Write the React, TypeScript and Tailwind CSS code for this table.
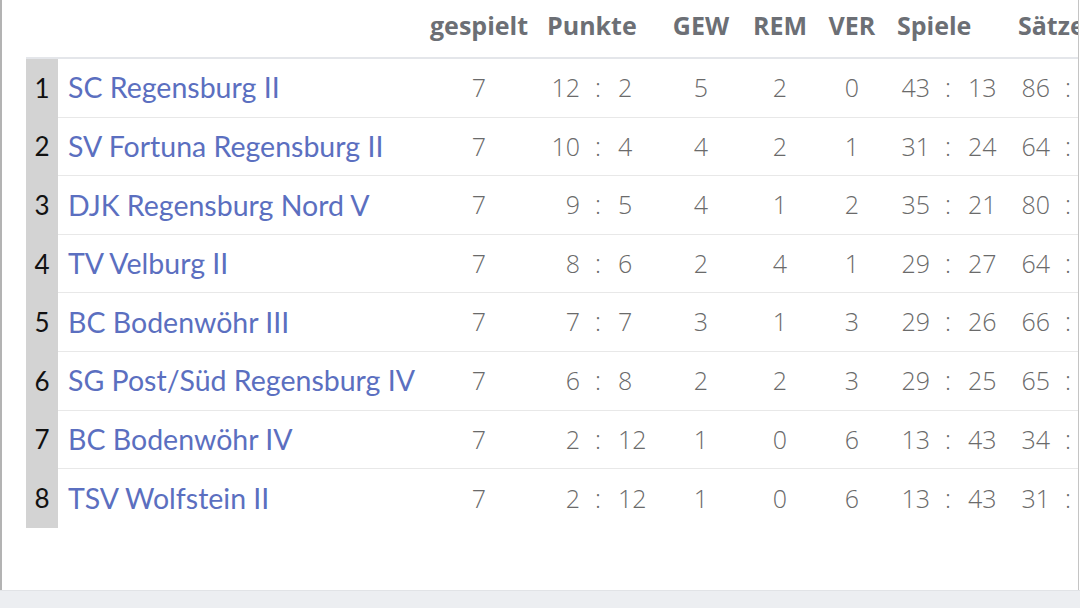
import React from "react";

type Row = {
  rank: number;
  name: string;
  sp: number;
  p: [number, number];
  g: number;
  r: number;
  v: number;
  s: [number, number];
  sa: number;
};

const rows: Row[] = [
  { rank: 1, name: "SC Regensburg II", sp: 7, p: [12, 2], g: 5, r: 2, v: 0, s: [43, 13], sa: 86 },
  { rank: 2, name: "SV Fortuna Regensburg II", sp: 7, p: [10, 4], g: 4, r: 2, v: 1, s: [31, 24], sa: 64 },
  { rank: 3, name: "DJK Regensburg Nord V", sp: 7, p: [9, 5], g: 4, r: 1, v: 2, s: [35, 21], sa: 80 },
  { rank: 4, name: "TV Velburg II", sp: 7, p: [8, 6], g: 2, r: 4, v: 1, s: [29, 27], sa: 64 },
  { rank: 5, name: "BC Bodenwöhr III", sp: 7, p: [7, 7], g: 3, r: 1, v: 3, s: [29, 26], sa: 66 },
  { rank: 6, name: "SG Post/Süd Regensburg IV", sp: 7, p: [6, 8], g: 2, r: 2, v: 3, s: [29, 25], sa: 65 },
  { rank: 7, name: "BC Bodenwöhr IV", sp: 7, p: [2, 12], g: 1, r: 0, v: 6, s: [13, 43], sa: 34 },
  { rank: 8, name: "TSV Wolfstein II", sp: 7, p: [2, 12], g: 1, r: 0, v: 6, s: [13, 43], sa: 31 },
];

const cols =
  "grid grid-cols-[32px_362px_118px_48px_24px_52px_78px_80px_64px_52px_24px_50px_46px_24px_60px]";

export default function App() {
  return (
    <div className="w-[1080px] h-[608px] bg-white relative overflow-hidden">
      <div className="flex flex-col h-full">
        <div className="flex-1 border-l-2 border-r border-l-[#b3b3b3] border-r-[#c4c4c4] mr-[1px] overflow-hidden">
          <div className="ml-[24px] w-[1200px]">
            {/* header */}
            <div
              className={`${cols} h-[59px] border-b-2 border-[#e4e6ea] items-center pb-[6px] text-[25px] font-bold text-[#6c6f75] [font-family:'Open_Sans',Lato,sans-serif] whitespace-nowrap`}
            >
              <div />
              <div />
              <div className="text-center">gespielt</div>
              <div className="col-span-3 pl-[9px]">Punkte</div>
              <div className="text-center">GEW</div>
              <div className="text-center">REM</div>
              <div className="text-center">VER</div>
              <div className="col-span-3 pl-[13px]">Spiele</div>
              <div className="col-span-3 pl-[8px]">Sätze</div>
            </div>
            {rows.map((r, i) => (
              <div
                key={r.rank}
                className={`${cols} h-[58.6px] items-stretch whitespace-nowrap`}
              >
                <div className="bg-[#d3d3d3] flex items-center justify-center text-[26px] text-[#111] [font-family:Lato,sans-serif]">
                  {r.rank}
                </div>
                <div
                  className={`col-span-14 grid grid-cols-[362px_118px_48px_24px_52px_78px_80px_64px_52px_24px_50px_46px_24px_60px] items-center ${
                    i < rows.length - 1 ? "border-b border-[#e8e8e8]" : ""
                  } text-[25px] font-light text-[#6a6a6a] [font-family:'Open_Sans',sans-serif]`}
                >
                  <div className="pl-[10px] text-[28.5px] font-normal text-[#5b6fc0] [font-family:Lato,sans-serif]">
                    {r.name}
                  </div>
                  <div className="text-center">{r.sp}</div>
                  <div className="text-right pr-[6px]">{r.p[0]}</div>
                  <div className="text-center">:</div>
                  <div className="pl-[8px]">{r.p[1]}</div>
                  <div className="text-center">{r.g}</div>
                  <div className="text-center">{r.r}</div>
                  <div className="text-center">{r.v}</div>
                  <div className="text-right pr-[6px]">{r.s[0]}</div>
                  <div className="text-center">:</div>
                  <div className="pl-[8px]">{r.s[1]}</div>
                  <div className="text-right pr-[6px]">{r.sa}</div>
                  <div className="text-center">:</div>
                  <div />
                </div>
              </div>
            ))}
          </div>
        </div>
        <div className="h-[18px] bg-[#eceef1] border-t border-[#e1e3e6]" />
      </div>
    </div>
  );
}
